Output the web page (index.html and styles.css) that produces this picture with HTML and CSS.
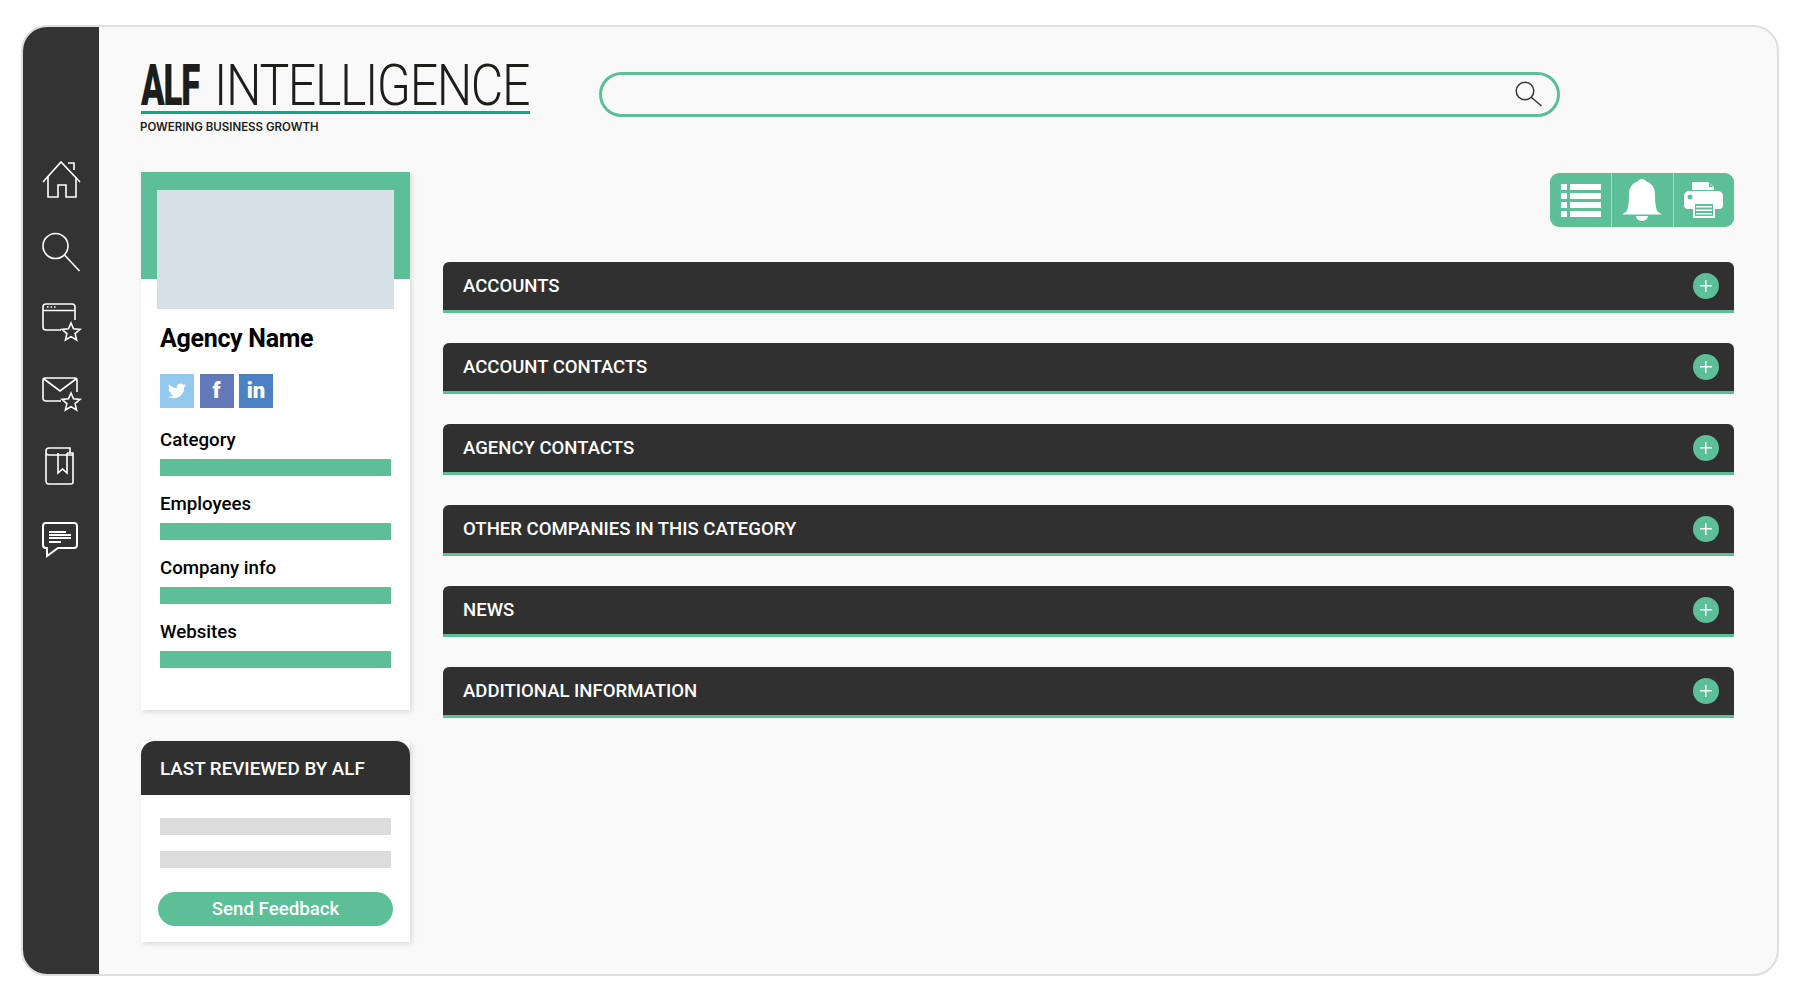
FILE: index.html
```html
<!DOCTYPE html>
<html lang="en">
<head>
<meta charset="utf-8">
<title>ALF Intelligence</title>
<link rel="stylesheet" href="styles.css">
</head>
<body>
<div class="frame">
  <aside class="rail">
    <svg class="rail-icon" viewBox="0 0 44 44"><path d="M4 24 22 4l19 20M9 19v20h10V27h8v12h10V19M29 5h6v7"/></svg>
    <svg class="rail-icon" viewBox="0 0 44 44"><circle cx="16.500" cy="16" r="12.500"/><path d="m25.500 25 15 16"/></svg>
    <svg class="rail-icon" viewBox="0 2 44 44"><path d="M22 30H7a3 3 0 0 1-3-3V7a3 3 0 0 1 3-3h26a3 3 0 0 1 3 3v13M4 10.500h32M8 7h1.500M11.500 7H13M15 7h1.500M32 23l2.500 5.800 6.500.6-4.900 4.200 1.500 6.400-5.600-3.400-5.600 3.400 1.500-6.400-4.900-4.200 6.500-.6z"/></svg>
    <svg class="rail-icon" viewBox="0 2 44 44"><path d="M22 29H7a3 3 0 0 1-3-3V8a2 2 0 0 1 2-2h30a2 2 0 0 1 2 2v12M5 7l16 12L37 7M32 21l2.500 5.800 6.500.6-4.900 4.200 1.500 6.400-5.600-3.400-5.600 3.400 1.500-6.400-4.900-4.200 6.500-.6z"/></svg>
    <svg class="rail-icon" viewBox="0 2 44 44"><path d="M7 9V7a3 3 0 0 1 3-3h21v5M7 9a3 3 0 0 0 3 2h24v27a2 2 0 0 1-2 2H10a3 3 0 0 1-3-3zM19 9v20l4.500-4 4.500 4V9M28 9h6v2"/></svg>
    <svg class="rail-icon icon-heavy" viewBox="0 0 44 44"><path d="M7 5h28a3 3 0 0 1 3 3v19a3 3 0 0 1-3 3H19L8 38v-8H7a3 3 0 0 1-3-3V8a3 3 0 0 1 3-3z"/><path d="M10 14h17M10 17h22M10 20h22M10 24h12"/></svg>
  </aside>

  <main class="main">
    <header class="top">
      <div class="logo">
        <div class="logo-mark"><span class="logo-alf">ALF</span><span class="logo-name">INTELLIGENCE</span></div>
        <div class="logo-tag">POWERING BUSINESS GROWTH</div>
      </div>
      <div class="search">
        <svg class="search-icon" viewBox="0 0 28 28"><circle cx="10" cy="10" r="8.800"/><path d="m16.500 16.500 10 8.500"/></svg>
      </div>
    </header>

    <div class="columns">
      <div class="left">
        <section class="card profile">
          <div class="photo"></div>
          <div class="profile-body">
            <h1 class="agency">Agency Name</h1>
            <div class="socials">
              <span class="social tw"><svg class="bird" viewBox="0 0 24 24"><path d="M23.953 4.570a10 10 0 0 1-2.825.775 4.958 4.958 0 0 0 2.163-2.723c-.951.555-2.005.959-3.127 1.184a4.920 4.920 0 0 0-8.384 4.482C7.690 8.095 4.067 6.130 1.640 3.162a4.822 4.822 0 0 0-.666 2.475c0 1.710.870 3.213 2.188 4.096a4.904 4.904 0 0 1-2.228-.616v.06a4.923 4.923 0 0 0 3.946 4.827 4.996 4.996 0 0 1-2.212.085 4.936 4.936 0 0 0 4.604 3.417 9.867 9.867 0 0 1-6.102 2.105c-.39 0-.779-.023-1.170-.067a13.995 13.995 0 0 0 7.557 2.209c9.053 0 13.998-7.496 13.998-13.985 0-.21 0-.42-.015-.63A9.935 9.935 0 0 0 24 4.590z"/></svg></span>
              <span class="social fb">f</span>
              <span class="social li">in</span>
            </div>
            <div class="fields">
              <div class="field"><div class="field-label">Category</div><div class="bar"></div></div>
              <div class="field"><div class="field-label">Employees</div><div class="bar"></div></div>
              <div class="field"><div class="field-label">Company info</div><div class="bar"></div></div>
              <div class="field"><div class="field-label">Websites</div><div class="bar"></div></div>
            </div>
          </div>
        </section>

        <section class="card review">
          <h2 class="review-head">LAST REVIEWED BY ALF</h2>
          <div class="review-body">
            <div class="grey"></div>
            <div class="grey"></div>
            <button class="feedback">Send Feedback</button>
          </div>
        </section>
      </div>

      <div class="right">
        <div class="tools-row">
          <div class="tools">
            <span class="tool">
              <svg class="t-list" viewBox="0 0 40 33"><path d="M0 0h6v6H0zM9 0h31v6H9zM0 9h6v6H0zM9 9h31v6H9zM0 18h6v6H0zM9 18h31v6H9zM0 27h6v6H0zM9 27h31v6H9z"/></svg>
            </span>
            <span class="tool">
              <svg class="t-bell" viewBox="0 0 40 42"><path d="M20 0c2 0 3.500 1 4.500 2.500C30 4.500 33 9 33 15c0 8 .5 13 2.500 17.500L40 35.500H0l4.500-3C6.500 28 7 23 7 15c0-6 3-10.500 8.500-12.500C16.500 1 18 0 20 0zM14 37h12c0 2.500-2.500 5-6 5s-6-2.500-6-5z"/></svg>
            </span>
            <span class="tool">
              <svg class="t-print" viewBox="0 0 39 36"><path d="M9 0h15l6 5v3H8V1a1 1 0 0 1 1-1z"/><path class="cut" d="m25 1 4 4h-4z"/><path d="M5 9h29a5 5 0 0 1 5 5v9a4 4 0 0 1-4 4h-4v9H9v-9H4a4 4 0 0 1-4-4v-9a5 5 0 0 1 5-5z"/><circle class="cut" cx="6" cy="15" r="2.500"/><path class="cut" d="M11 22h18v12H11z"/><path d="M12 24h16v1.500H12zM12 27.500h16V29H12zM12 31h16v1.500H12z"/></svg>
            </span>
          </div>
        </div>
        <div class="accordion">
          <div class="acc"><span>ACCOUNTS</span><i class="plus"></i></div>
          <div class="acc"><span>ACCOUNT CONTACTS</span><i class="plus"></i></div>
          <div class="acc"><span>AGENCY CONTACTS</span><i class="plus"></i></div>
          <div class="acc"><span>OTHER COMPANIES IN THIS CATEGORY</span><i class="plus"></i></div>
          <div class="acc"><span>NEWS</span><i class="plus"></i></div>
          <div class="acc"><span>ADDITIONAL INFORMATION</span><i class="plus"></i></div>
        </div>
      </div>
    </div>
  </main>
</div>
</body>
</html>
```

FILE: styles.css
```css
* { box-sizing: border-box; }
html, body { margin: 0; height: 100%; background: #fff; }
body { padding: 25px 21px 24px; font-family: Roboto, "Liberation Sans", sans-serif; overflow: hidden; }

.frame {
  display: flex; height: 951px; width: 1758px;
  border: 2px solid #dedede; border-radius: 26px; overflow: hidden; background: #f9f9f9;
}

.rail {
  width: 76px; flex: none; background: #333; display: flex; flex-direction: column;
  align-items: center; gap: 28px; padding-top: 131px;
}
.rail-icon { width: 44px; height: 44px; fill: none; stroke: #fff; stroke-width: 1.600; }
.icon-heavy { stroke-width: 2; }

.main { flex: 1; padding: 33px 43px 0 42px; min-width: 0; }

.top { display: flex; height: 112px; }
.logo { width: 389px; flex: none; margin-right: 69px; }
.logo-mark {
  display: flex; align-items: center; height: 54px; color: #1d1d1b; padding-bottom: 2px;
  border-bottom: 3px solid #0ea887; line-height: 48px; white-space: nowrap;
}
.logo-alf {
  display: inline-block; width: 73px; font-size: 58px; font-weight: 900; letter-spacing: -2px;
  transform: scaleX(.6); transform-origin: left center; flex: none;
}
.logo-name {
  display: inline-block; font-size: 58px; font-weight: 300; letter-spacing: -1.600px;
  transform: scaleX(.862); transform-origin: left center;
}
.logo-tag { margin: 5px 0 0 -1px; font: 600 11.500px/16px Inter, sans-serif; color: #1d1d1b; }

.search {
  width: 961px; height: 45px; margin-top: 12px; border: 3px solid #5cbf98; border-radius: 23px;
  display: flex; justify-content: flex-end; align-items: center; padding-right: 14px;
}
.search-icon { width: 28px; height: 28px; fill: none; stroke: #333; stroke-width: 1.500; }

.columns { display: flex; gap: 33px; }
.left { width: 269px; flex: none; display: flex; flex-direction: column; gap: 31px; }
.right { flex: 1; min-width: 0; }

.card { background: #fff; box-shadow: 2px 2px 5px rgba(0, 0, 0, .12); }

.profile { height: 538px; padding-top: 18px; background: linear-gradient(#5cbf98 107px, #fff 107px); }
.photo { height: 119px; margin: 0 16px; background: #d6e1e7; }
.profile-body { padding: 15px 19px 0; }
.agency { margin: 0; font-size: 25px; line-height: 30px; font-weight: 700; color: #000; letter-spacing: -.3px; }
.socials { display: flex; gap: 5.500px; margin-top: 20px; }
.social {
  width: 34px; height: 34px; display: flex; align-items: center; justify-content: center;
  color: #fff; font-weight: 900; font-size: 22px; line-height: 1;
}
.tw { background: #93c9ef; }
.fb { background: #6278b9; }
.li { background: #4c82c3; }
.bird { width: 18px; height: 18px; fill: #fff; }
.fields { display: flex; flex-direction: column; gap: 17px; margin-top: 21px; }
.field-label { font-size: 18.700px; line-height: 22px; font-weight: 500; color: #000; }
.bar { height: 17px; margin-top: 8px; background: #5cbf98; }

.review-head {
  margin: 0; height: 54px; padding-left: 19px; background: #303030; color: #fff;
  border-radius: 14px 14px 0 0; font-size: 18.800px; font-weight: 500; line-height: 56px;
}
.review-body { padding: 23px 19px 16px; display: flex; flex-direction: column; }
.grey { height: 17px; margin-bottom: 16px; background: #dcdcdc; }
.feedback {
  margin: 8px -2px 0; height: 34px; border: 0; border-radius: 17px; background: #5cbf98;
  color: #fff; font: 500 18.700px/34px Roboto, sans-serif; padding: 0;
}

.tools-row { display: flex; justify-content: flex-end; padding-top: 1px; margin-bottom: 35px; }
.tools { display: flex; width: 184px; height: 54px; background: #5cbf98; border-radius: 9px; overflow: hidden; }
.tool { flex: 1; display: flex; align-items: center; justify-content: center; border-left: 1px solid #a3dcc5; }
.tool:first-child { border-left: 0; padding-left: 1px; }
.tool svg { fill: #fff; }
.t-list { width: 40px; height: 33px; }
.t-bell { width: 40px; height: 42px; }
.t-print { width: 39px; height: 36px; }
.cut { fill: #5cbf98; }

.accordion { display: flex; flex-direction: column; gap: 30px; }
.acc {
  height: 51px; display: flex; align-items: center; justify-content: space-between;
  padding: 0 15px 0 20px; background: #303030; border-bottom: 3px solid #5cbf98;
  border-radius: 6px 6px 0 0; color: #fff; font-size: 18.560px; font-weight: 500;
}
.plus {
  width: 26px; height: 26px; border-radius: 50%; flex: none;
  background:
    linear-gradient(#fff, #fff) center / 12px 1.500px no-repeat,
    linear-gradient(#fff, #fff) center / 1.500px 12px no-repeat,
    #5cbf98;
}
```
